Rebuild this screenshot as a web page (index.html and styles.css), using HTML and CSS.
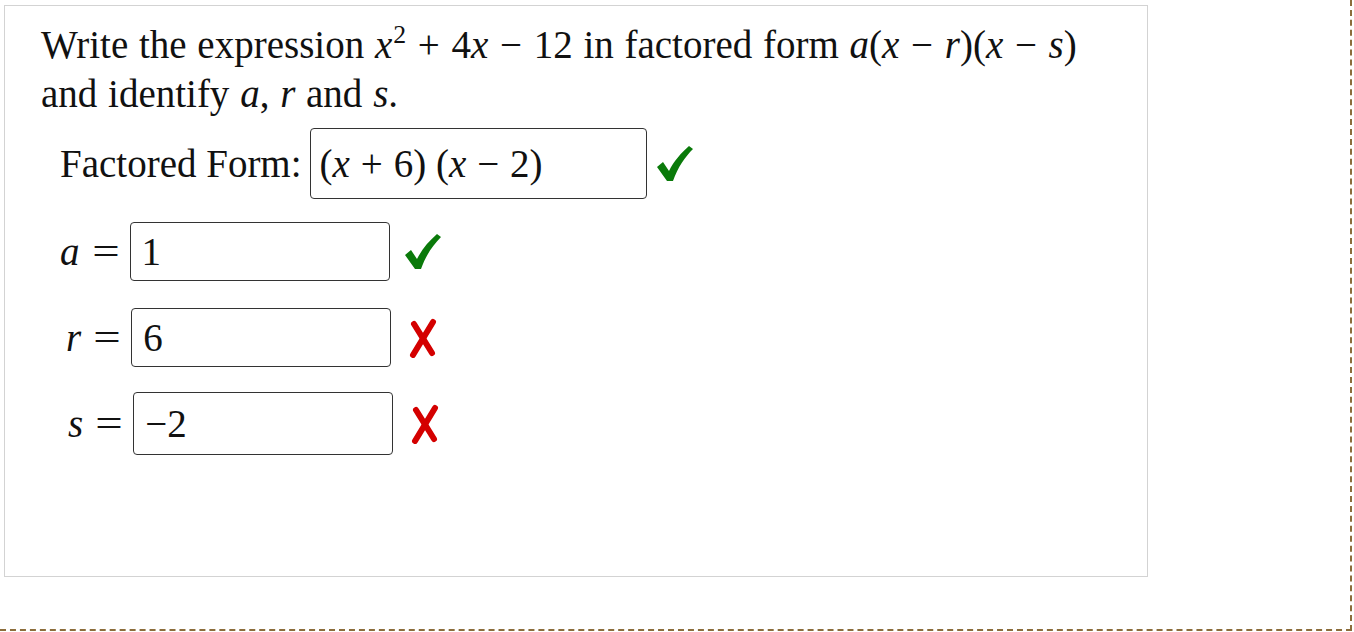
FILE: index.html
```html
<!DOCTYPE html>
<html>
<head>
<meta charset="utf-8">
<link rel="stylesheet" href="styles.css">
</head>
<body>
<div class="frame">
  <div class="panel">
    <p class="prompt">Write the expression <span class="m"><i>x</i><sup>2</sup><span class="op">+</span>4<i>x</i><span class="op">−</span>12</span> in factored form <span class="m"><i>a</i>(<i>x</i><span class="op">−</span><i>r</i>)(<i>x</i><span class="op">−</span><i>s</i>)</span> and identify <i>a</i>, <i>r</i> and <i>s</i>.</p>

    <div class="row row-form">
      <span class="label">Factored Form:</span>
      <div class="box box-wide"><span class="m">(<i>x</i><span class="op">+</span>6)&nbsp;(<i>x</i><span class="op">−</span>2)</span></div>
      <svg class="mark ok" viewBox="0 0 36 36" width="36" height="36"><path d="M0 21 L6 16 L12 25 C17 15 24 7 32 0 L36 3 C28 11 21 21 16 35 L10 35 Z"/></svg>
    </div>

    <div class="row row-a">
      <span class="label"><i>a</i><span class="op eq">=</span></span>
      <div class="box"><span class="m">1</span></div>
      <svg class="mark ok" viewBox="0 0 36 36" width="36" height="36"><path d="M0 21 L6 16 L12 25 C17 15 24 7 32 0 L36 3 C28 11 21 21 16 35 L10 35 Z"/></svg>
    </div>

    <div class="row row-r">
      <span class="label"><i>r</i><span class="op eq">=</span></span>
      <div class="box"><span class="m">6</span></div>
      <svg class="mark bad" viewBox="0 0 32 40" width="32" height="40"><path d="M8 6 L26 35"/><path d="M27 4 L7 37"/></svg>
    </div>

    <div class="row row-s">
      <span class="label"><i>s</i><span class="op eq">=</span></span>
      <div class="box box-tall"><span class="m">−2</span></div>
      <svg class="mark bad" viewBox="0 0 32 40" width="32" height="40"><path d="M8 6 L26 35"/><path d="M27 4 L7 37"/></svg>
    </div>
  </div>
</div>
</body>
</html>
```

FILE: styles.css
```css
html, body {
  margin: 0;
  padding: 0;
  background: #fff;
}

body {
  font-family: "Liberation Serif", "Times New Roman", serif;
  color: #111;
  font-size: 39px;
}

.frame {
  box-sizing: border-box;
  width: 1352px;
  height: 631px;
  border-right: 2px dashed #8c6d3c;
  border-bottom: 2px dashed #8c6d3c;
  padding: 5px 0 0 4px;
}

.panel {
  box-sizing: border-box;
  width: 1144px;
  height: 572px;
  border: 1px solid #d3d3d3;
  background: #fff;
}

.prompt {
  margin: 0;
  padding: 14px 56px 0 36px;
  line-height: 49px;
  word-spacing: 1px;
}

.prompt .m {
  word-spacing: 0;
}

.m i,
.label i,
.prompt i {
  font-style: italic;
}

.op {
  margin: 0 0.3em;
}

sup {
  font-size: 0.66em;
  line-height: 0;
  vertical-align: 0.6em;
  margin-left: 1px;
}

.row {
  display: flex;
  align-items: center;
}

.label {
  white-space: nowrap;
  margin-right: 12px;
}

/* wider equals sign in the variable labels */
.label .eq {
  display: inline-block;
  width: 24px;
  margin: 0 0 0 14px;
  text-align: center;
  transform: scaleX(1.25);
}

.box {
  box-sizing: border-box;
  width: 260px;
  height: 59px;
  border: 1px solid #333;
  border-radius: 4px;
  display: flex;
  align-items: center;
  padding-left: 11px;
}

.box-wide {
  width: 337px;
  height: 71px;
  padding-left: 9px;
}

.box-wide .op {
  margin: 0 0.28em;
}

.box-tall {
  height: 63px;
}

.row-form {
  margin: 10px 0 0 55px;
}

.row-form .label {
  margin-right: 8px;
}

.row-a {
  margin: 23px 0 0 55px;
}

.row-r {
  margin: 27px 0 0 61px;
}

.row-s {
  margin: 25px 0 0 63px;
}

.mark {
  margin-left: 15px;
}

.row-form .mark {
  margin-left: 10px;
}

.ok {
  fill: #0a7a0a;
}

.bad {
  fill: none;
  stroke: #d40000;
  stroke-width: 6;
  stroke-linecap: round;
}
```
